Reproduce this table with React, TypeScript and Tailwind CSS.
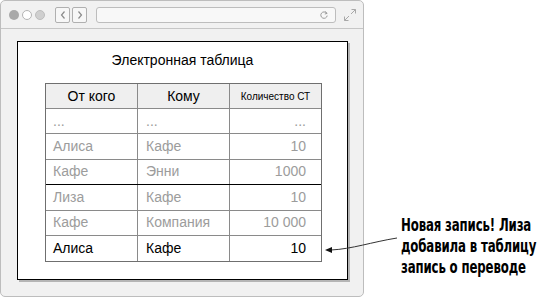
import React from "react";

const rows = [
  { from: "...", to: "...", amount: "...", strong: false },
  { from: "Алиса", to: "Кафе", amount: "10", strong: false },
  { from: "Кафе", to: "Энни", amount: "1000", strong: false },
  { from: "Лиза", to: "Кафе", amount: "10", strong: false },
  { from: "Кафе", to: "Компания", amount: "10 000", strong: false },
  { from: "Алиса", to: "Кафе", amount: "10", strong: true },
];

const Chevron = ({ dir }: { dir: "left" | "right" }) => (
  <svg width="8" height="10" viewBox="0 0 8 10">
    <path
      d={dir === "left" ? "M5.5 1.5 L2.5 5 L5.5 8.5" : "M2.5 1.5 L5.5 5 L2.5 8.5"}
      fill="none"
      stroke="#8a8a8a"
      strokeWidth="1.2"
    />
  </svg>
);

const Toolbar = () => (
  <div className="flex h-[28px] items-center border-b border-[#c6c6c6] pl-[8px]">
    <div className="flex items-center gap-[3px]">
      <span className="h-[10px] w-[10px] rounded-full bg-[#a9a9a9]" />
      <span className="h-[10px] w-[10px] rounded-full border border-[#b4b4b4] bg-white" />
      <span className="h-[10px] w-[10px] rounded-full border border-[#bdbdbd] bg-[#cfcfcf]" />
    </div>
    <div className="ml-[10px] flex gap-[2px]">
      <div className="flex h-[16px] w-[15px] items-center justify-center rounded-[2px] border border-[#b0b0b0] bg-[#f7f7f7]">
        <Chevron dir="left" />
      </div>
      <div className="flex h-[16px] w-[15px] items-center justify-center rounded-[2px] border border-[#b0b0b0] bg-[#f7f7f7]">
        <Chevron dir="right" />
      </div>
    </div>
    <div className="ml-[9px] flex h-[16px] w-[240px] items-center justify-end rounded-[3px] border border-[#bdbdbd] bg-[#f8f8f8] pr-[6px]">
      <svg width="10" height="10" viewBox="0 0 10 10">
        <path d="M7.6 3.2 A3.2 3.2 0 1 0 8.2 5.6" fill="none" stroke="#9a9a9a" strokeWidth="1" />
        <path d="M6.2 1.6 L8.2 3.4 L5.8 4" fill="none" stroke="#9a9a9a" strokeWidth="1" />
      </svg>
    </div>
    <svg className="ml-[7px]" width="14" height="14" viewBox="0 0 14 14">
      <path d="M8.5 1.5 H12.5 V5.5 M12.5 1.5 L8 6 M5.5 12.5 H1.5 V8.5 M1.5 12.5 L6 8" fill="none" stroke="#a8a8a8" strokeWidth="1" />
    </svg>
  </div>
);

const Sheet = () => (
  <div className="flex h-[239px] w-[331px] flex-col border border-black bg-white shadow-[2px_2px_0_#b5b5b5]">
    <div className="mt-[9px] text-center text-[14px] leading-[18px] text-black">
      Электронная таблица
    </div>
    <div className="ml-[27px] mt-[14px] w-[277px] border border-[#6f6f6f]">
      <div className="flex h-[25px] border-b border-[#8a8a8a] bg-[#efefef] text-black">
        <div className="flex w-[92px] items-center justify-center border-r border-[#8a8a8a] text-[14px]">От кого</div>
        <div className="flex w-[92px] items-center justify-center border-r border-[#8a8a8a] text-[14px]">Кому</div>
        <div className="flex flex-1 items-center justify-center text-[10px]">Количество СТ</div>
      </div>
      {rows.map((row, i) => (
        <div
          key={i}
          className={`flex h-[25.4px] text-[14px] ${row.strong ? "text-black" : "text-[#9c9c9c]"} ${
            i === rows.length - 1 ? "" : i === 2 ? "border-b border-black" : "border-b border-[#8a8a8a]"
          }`}
        >
          <div className="flex w-[92px] items-center border-r border-[#8a8a8a] pl-[7px]">{row.from}</div>
          <div className="flex w-[92px] items-center border-r border-[#8a8a8a] pl-[8px]">{row.to}</div>
          <div className="flex flex-1 items-center justify-end pr-[15px]">{row.amount}</div>
        </div>
      ))}
    </div>
  </div>
);

export default function App() {
  return (
    <div className="relative h-[299px] w-[540px] overflow-hidden bg-white font-['Liberation_Sans',Arial,sans-serif]">
      <div className="flex">
        <div className="flex h-[297px] w-[364px] shrink-0 flex-col rounded-[5px] border border-[#bdbdbd] bg-[#f1f1f1]">
          <Toolbar />
          <div className="pl-[16px] pt-[12px]">
            <Sheet />
          </div>
        </div>
        <div className="ml-[37px] mt-[215px] origin-left scale-x-[0.77] whitespace-nowrap font-['DejaVu_Sans_Condensed','DejaVu_Sans',sans-serif] text-[17px] font-bold leading-[21px] tracking-[-0.2px] text-black">
          <div>Новая запись! Лиза</div>
          <div>добавила в таблицу</div>
          <div>запись о переводе</div>
        </div>
      </div>
      <svg className="absolute left-[322px] top-[230px]" width="80" height="26" viewBox="0 0 80 26">
        <path d="M9 20 C30 19 50 12 75 8" fill="none" stroke="#333" strokeWidth="1" />
        <path d="M3 20 L10 17 L10 23 Z" fill="#111" />
      </svg>
    </div>
  );
}
